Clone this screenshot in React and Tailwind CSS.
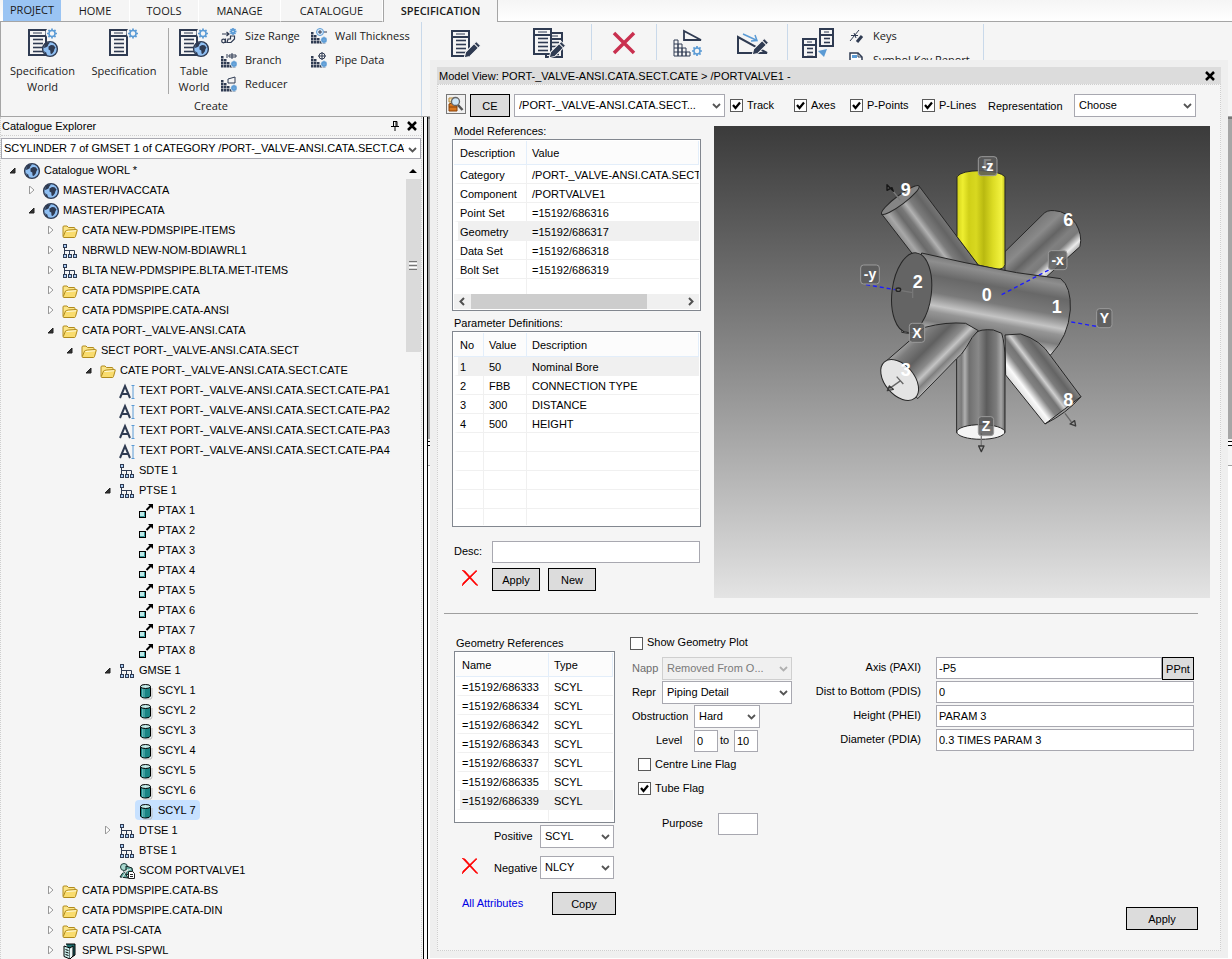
import React from 'react';

const NAVY = '#2f3b52';
const BLUE = '#5b9bd5';

/* ---------- shared drawing pieces ---------- */

const Gear = ({ x, y, r = 3 }) => (
  <g transform={`translate(${x} ${y})`} stroke={BLUE} fill="none">
    <circle r={r} strokeWidth="1.5" />
    {[0, 45, 90, 135, 180, 225, 270, 315].map((a) => (
      <path key={a} d={`M0 ${-r}V${-r - 2}`} strokeWidth="1.7" transform={`rotate(${a})`} />
    ))}
  </g>
);

const Globe = ({ x = 8, y = 8 }) => (
  <g transform={`translate(${x} ${y})`}>
    <circle r="7.4" fill="#8fbff2" stroke={NAVY} strokeWidth="1.4" />
    <path d="M-5.500 -4.500C-4 -6.500 -1.500 -7.200 0 -6.500L-1.500 -4.800L-2.500 -2.500L-4.500 -1.500L-6 -1Z" fill={NAVY} />
    <path d="M-1.500 -2.500L1 -4L3.500 -3.800L5.500 -1.500L4.500 0L3.800 2.500L1.800 5L.5 4.500L.3 1.500L-1.500 .5Z" fill={NAVY} />
    <path d="M-6 2L-4 3.500L-2.500 6.500L-5 5Z" fill={NAVY} />
  </g>
);

const Page = ({ x, y, w = 17, h = 25, lines = 4 }) => (
  <g transform={`translate(${x} ${y})`}>
    <rect x="1" y="1" width={w} height={h} fill="#f5f5f5" stroke={NAVY} strokeWidth="2" />
    <path d={`M1 7H${w + 1}`} stroke={NAVY} strokeWidth="2" />
    <path d={`M5 4H${w - 3}`} stroke={NAVY} />
    {Array.from({ length: lines }, (_, i) => (
      <path key={i} d={`M5 ${10.5 + i * 4}H${w - 2}`} stroke={NAVY} strokeWidth="1.6" />
    ))}
  </g>
);

const Pencil = ({ x, y }) => (
  <g transform={`translate(${x} ${y}) rotate(45)`}>
    <path d="M-3 -9H3V6L0 11L-3 6Z" fill={NAVY} stroke="#f5f5f5" strokeWidth="1" />
    <path d="M-3 -6H3" stroke="#f5f5f5" strokeWidth="1" />
  </g>
);

const Steps = ({ cell = 2.5 }) => (
  <g fill={NAVY}>
    {[0, 1, 2, 3].map((c) =>
      [0, 1, 2, 3].filter((r) => r >= c).map((r) => (
        <rect key={`${c}-${r}`} x={c * 3} y={4 + r * 3} width={cell} height={cell} />
      ))
    )}
    <rect x="12" y="13" width={cell} height={cell} />
  </g>
);

/* ---------- ribbon icons ---------- */

const SpecIcon = ({ world }) => (
  <svg width="32" height="30" viewBox="0 0 32 30" aria-hidden="true">
    <Page x={1} y={1} />
    <circle cx="25" cy="5" r="6.500" fill="#f5f5f5" />
    <Gear x={25} y={5.5} r={3} />
    {world && <Globe x={23} y={21} />}
  </svg>
);

const ModifyIcon = ({ double }) => (
  <svg width="34" height="30" viewBox="0 0 34 30" aria-hidden="true">
    {double && <Page x={12} y={4} w={16} h={24} />}
    <Page x={double ? 0 : 3} y={double ? 0 : 2} />
    <Pencil x={24} y={22} />
  </svg>
);

const DeleteIcon = () => (
  <svg width="24" height="30" viewBox="0 0 24 30" aria-hidden="true">
    <path d="M2 5L22 25M22 5L2 25" stroke="#c9304f" strokeWidth="3.500" />
  </svg>
);

const WedgeGridIcon = () => (
  <svg width="32" height="30" viewBox="0 0 32 30" aria-hidden="true">
    <path d="M12 3V12H29Z" fill="#f5f5f5" stroke={NAVY} strokeWidth="1.800" />
    <path d="M2 12H6V28H2ZM6 16H10V28H6ZM10 20H14V28H10ZM14 24H18V28H14ZM2 16H6M2 20H10M2 24H14" fill="none" stroke={NAVY} />
    <Gear x={25} y={23} r={3} />
  </svg>
);

const WedgeEditIcon = () => (
  <svg width="34" height="30" viewBox="0 0 34 30" aria-hidden="true">
    <path d="M2 9V25H31Z" fill="none" stroke={NAVY} strokeWidth="2" />
    <path d="M7 6L20 12M15 13L21 12.500L19 7" fill="none" stroke={BLUE} strokeWidth="1.500" />
    <Pencil x={24} y={19} />
  </svg>
);

const CopyPagesIcon = () => (
  <svg width="34" height="30" viewBox="0 0 34 30" aria-hidden="true">
    <Page x={17} y={0} w={13} h={17} lines={2} />
    <Page x={0} y={10} w={13} h={18} lines={3} />
    <path d="M16 23L25 21L22 29Z" fill={BLUE} />
  </svg>
);

const SmallIcon = ({ kind }) => (
  <svg width="16" height="16" viewBox="0 0 16 16" className="shrink-0" aria-hidden="true">
    {kind === 'size' && (
      <>
        <path d="M1 6H8M5.500 4L8 6L5.500 8" fill="none" stroke={NAVY} strokeWidth="1.200" />
        <circle cx="2.500" cy="13" r="1.800" fill="none" stroke={NAVY} strokeWidth="1.200" />
        <path d="M4.500 10.500V15M6 14.500H10L13.500 11V8H9.500V11H7Z" fill="none" stroke={NAVY} strokeWidth="1.200" />
        <Gear x={12} y={3.5} r={1.5} />
      </>
    )}
    {['branch', 'reducer', 'wall', 'pipe'].includes(kind) && (
      <>
        <Steps />
        <circle cx="13" cy="12" r="3.500" fill="#f5f5f5" />
        <Gear x={13} y={12} r={1.2} />
      </>
    )}
    {kind === 'branch' && <path d="M6 2V6M8 3H15V5H8ZM11 1V7" fill="none" stroke={NAVY} />}
    {kind === 'reducer' && <path d="M7 3L14 1V7H7Z" fill="#f5f5f5" stroke={NAVY} />}
    {kind === 'wall' && (
      <>
        <circle cx="9" cy="4" r="3.500" fill="#dcebfa" stroke={BLUE} />
        <path d="M9 2V6M7 4H11M13 4H16" stroke={NAVY} />
      </>
    )}
    {kind === 'pipe' && (
      <>
        <circle cx="11" cy="4" r="3" fill="none" stroke={NAVY} />
        <path d="M11 0V8M7 4H15" stroke={NAVY} />
      </>
    )}
    {kind === 'keys' && (
      <>
        <path d="M1 13L10 2M2 7.500H9M5 5L7 10" fill="none" stroke={NAVY} />
        <path d="M8 14L13 8" stroke={NAVY} strokeWidth="3" />
      </>
    )}
    {kind === 'report' && (
      <>
        <path d="M1 1H9L13 5V15H1Z" fill="#fff" stroke={NAVY} strokeWidth="1.500" />
        <path d="M3 3H8V6H3Z" fill={BLUE} />
        <path d="M9 1V5H13" fill="none" stroke={NAVY} />
      </>
    )}
  </svg>
);

/* ---------- tree icons ---------- */

const TreeIcon = ({ type }) => (
  <svg width="16" height="16" viewBox="0 0 16 16" className="mt-0.5 shrink-0 overflow-visible" aria-hidden="true">
    {type === 'globe' && <Globe x={8} y={8} />}
    {type === 'folder' && (
      <>
        <path d="M1 13.500V4Q1 3 2 3H5L6.500 4.500H12Q13 4.500 13 5.500V7" fill="#fbe487" stroke="#b08a1c" />
        <path d="M2 14.500Q1 14.500 1.300 13.500L3.500 8Q3.800 7.500 4.500 7.500L6.500 7L14.500 6.500Q15.500 6.500 15.200 7.500L13.500 13.500Q13.200 14.500 12.500 14.500Z" fill="#f9dc6e" stroke="#b08a1c" />
        <path d="M4.500 8.500L14 7.800" stroke="#fffbe0" />
      </>
    )}
    {type === 'nodes' && (
      <g stroke={NAVY} fill="#a9cdf6">
        <path d="M2.500 4V12M2.500 7.500H12.500V12M7.500 7.500V12" fill="none" />
        <rect x="1.500" y="1.500" width="3" height="3" />
        <rect x="1.500" y="11.500" width="3" height="3" />
        <rect x="6.500" y="11.500" width="3" height="3" />
        <rect x="11.500" y="11.500" width="3" height="3" />
      </g>
    )}
    {type === 'text' && (
      <>
        <path d="M1 15L6 3L11 15M3 11H9" fill="none" stroke={NAVY} strokeWidth="2" />
        <path d="M12.500 2.500H15.500M14 2.500V15.500M12.500 15.500H15.500" stroke={BLUE} fill="none" />
      </>
    )}
    {type === 'point' && (
      <>
        <rect x="1.500" y="8.500" width="6" height="6" fill="#bdebea" stroke="#000" />
        <path d="M6.500 9V13.500H2" fill="none" stroke="#3a9c9c" />
        <path d="M8.500 7L13 2.500" stroke="#000" strokeWidth="2" />
        <path d="M10 1H15V6Z" fill="#000" />
      </>
    )}
    {type === 'cyl' && (
      <>
        <path d="M5 16H13L14 14V5" fill="none" stroke="#b9b9b9" />
        <path d="M2.500 3.500V13Q3 15 7.500 15Q12 15 12.500 13V3.500Z" fill="#1b8484" stroke="#000" />
        <path d="M4.500 5V14M6 5.500V14.500" stroke="#66baba" />
        <ellipse cx="7.500" cy="3.500" rx="5" ry="2" fill="#c4ecea" stroke="#000" />
      </>
    )}
    {type === 'comp' && (
      <>
        <circle cx="5" cy="4" r="3.500" fill="#a8d8cf" stroke="#1d3f3c" />
        <path d="M7 3L13 5L14 10L7 12ZM1 14L5 8L9 15Z" fill="#5fa79c" stroke="#122" />
        <path d="M2 10L12 6M3 15L9 6" stroke="#fff" strokeWidth=".8" />
        <path d="M9.500 8.500H13.500L15.500 10.500V15.500H9.500Z" fill="#fff" stroke="#222" />
        <path d="M11 11.500H14M11 13.500H14" stroke="#222" />
      </>
    )}
    {type === 'book' && (
      <>
        <path d="M4 1H13V12L10 14" fill="#1c6b6b" stroke="#000" />
        <path d="M2 3L8 5V16L2 13.500Z" fill="#c9ecea" stroke="#000" />
        <path d="M8 5L11 3V13L8 16" fill="#e8f6f5" stroke="#000" />
        <path d="M3.500 6.500L6.500 7.500M3.500 9L6.500 10M3.500 11.500L6.500 12.500" stroke="#000" />
      </>
    )}
  </svg>
);

const RedCross = () => (
  <svg width="16" height="16" viewBox="0 0 16 16" className="shrink-0" aria-hidden="true">
    <path d="M0 0L3 1L16 15.500L14 15Z M0 16L1 13L14 0.500L15 1Z" fill="#f00" stroke="#f00" strokeWidth=".6" />
  </svg>
);

/* ---------- form controls ---------- */

const Select = ({ label, value, className, disabled, text = 'truncate pl-1 pr-5', height = 'h-[23px]' }) => (
  <span className={`relative block shrink-0 ${height} ${className}`}>
    <select
      aria-label={label}
      disabled={disabled}
      className={`block h-full w-full appearance-none border pb-0.5 outline-none ${text} ${
        disabled ? 'border-[#cfcfcf] bg-[#f0f0f0] text-[#7a7a7a]' : 'border-[#a8a8b0] bg-white text-black'
      }`}
    >
      <option>{value}</option>
    </select>
    <svg className="pointer-events-none absolute right-1 top-2" width="9" height="8" viewBox="0 0 9 8" aria-hidden="true">
      <path d="M1 2L4.500 5.500L8 2" fill="none" stroke={disabled ? '#b0b0b0' : '#555'} strokeWidth="1.800" />
    </svg>
  </span>
);

const Check = ({ label, checked, className = '' }) => (
  <label className={`flex shrink-0 items-center gap-1 whitespace-nowrap ${className}`}>
    <span className="relative block h-[13px] w-[13px]">
      <input type="checkbox" defaultChecked={checked} className="peer block h-[13px] w-[13px] appearance-none border border-[#5a5a5a] bg-white" />
      <svg className="pointer-events-none absolute left-0 top-0 hidden peer-checked:block" width="13" height="13" viewBox="0 0 13 13" aria-hidden="true">
        <path d="M3 6L5.500 9L10 3.500" fill="none" stroke="#000" strokeWidth="2.200" />
      </svg>
    </span>
    <span className="pb-0.5">{label}</span>
  </label>
);

const Button = ({ children, className }) => (
  <button type="button" className={`h-[23px] shrink-0 border border-black bg-[#dcdcdc] ${className}`}>
    {children}
  </button>
);

const Input = ({ className = '', ...rest }) => (
  <input type="text" className={`h-[22px] min-w-0 border border-[#a8a8b0] bg-white px-0.5 outline-none ${className}`} {...rest} />
);

const CloseIcon = () => (
  <svg width="10" height="10" viewBox="0 0 10 10" aria-hidden="true">
    <path d="M1 1L9 9M9 1L1 9" stroke="#000" strokeWidth="2.500" />
  </svg>
);

const ListTable = ({ columns, rows, selected, className, footer }) => (
  <div className={`flex flex-col overflow-hidden border border-[#82878f] bg-white p-px ${className}`}>
    <div className="min-h-0 flex-1 overflow-hidden">
      <table className="w-full table-fixed border-separate border-spacing-0 text-left">
        <thead>
          <tr className="h-6 bg-[#fcfcfc]">
            {columns.map((c) => (
              <th key={c.name} className={`border-b border-r border-[#e3eefa] p-0 pl-[5px] font-normal first:pl-1.5 ${c.width}`}>
                {c.name}
              </th>
            ))}
          </tr>
        </thead>
        <tbody>
          {rows.map((row, i) => (
            <tr key={i} className={`h-[19px] ${i === selected ? 'bg-[#f0f0f0]' : ''}`}>
              {columns.map((c, j) => (
                <td
                  key={c.name}
                  className={`overflow-hidden whitespace-nowrap border-b border-b-[#f0f0f0] p-0 pt-0.5 ${
                    j === 0 ? 'border-l-4 border-l-white pl-0.5' : 'pl-[5px]'
                  } ${j < columns.length - 1 ? 'border-r border-r-[#f0f0f0]' : ''}`}
                >
                  {row[j]}
                </td>
              ))}
            </tr>
          ))}
        </tbody>
      </table>
    </div>
    {footer}
  </div>
);

/* ---------- data ---------- */

const tree = [
  [0, 'open', 'globe', 'Catalogue WORL *'],
  [1, 'closed', 'globe', 'MASTER/HVACCATA'],
  [1, 'open', 'globe', 'MASTER/PIPECATA'],
  [2, 'closed', 'folder', 'CATA NEW-PDMSPIPE-ITEMS'],
  [2, 'closed', 'nodes', 'NBRWLD NEW-NOM-BDIAWRL1'],
  [2, 'closed', 'nodes', 'BLTA NEW-PDMSPIPE.BLTA.MET-ITEMS'],
  [2, 'closed', 'folder', 'CATA PDMSPIPE.CATA'],
  [2, 'closed', 'folder', 'CATA PDMSPIPE.CATA-ANSI'],
  [2, 'open', 'folder', 'CATA PORT-_VALVE-ANSI.CATA'],
  [3, 'open', 'folder', 'SECT PORT-_VALVE-ANSI.CATA.SECT'],
  [4, 'open', 'folder', 'CATE PORT-_VALVE-ANSI.CATA.SECT.CATE'],
  [5, '', 'text', 'TEXT PORT-_VALVE-ANSI.CATA.SECT.CATE-PA1'],
  [5, '', 'text', 'TEXT PORT-_VALVE-ANSI.CATA.SECT.CATE-PA2'],
  [5, '', 'text', 'TEXT PORT-_VALVE-ANSI.CATA.SECT.CATE-PA3'],
  [5, '', 'text', 'TEXT PORT-_VALVE-ANSI.CATA.SECT.CATE-PA4'],
  [5, '', 'nodes', 'SDTE 1'],
  [5, 'open', 'nodes', 'PTSE 1'],
  [6, '', 'point', 'PTAX 1'],
  [6, '', 'point', 'PTAX 2'],
  [6, '', 'point', 'PTAX 3'],
  [6, '', 'point', 'PTAX 4'],
  [6, '', 'point', 'PTAX 5'],
  [6, '', 'point', 'PTAX 6'],
  [6, '', 'point', 'PTAX 7'],
  [6, '', 'point', 'PTAX 8'],
  [5, 'open', 'nodes', 'GMSE 1'],
  [6, '', 'cyl', 'SCYL 1'],
  [6, '', 'cyl', 'SCYL 2'],
  [6, '', 'cyl', 'SCYL 3'],
  [6, '', 'cyl', 'SCYL 4'],
  [6, '', 'cyl', 'SCYL 5'],
  [6, '', 'cyl', 'SCYL 6'],
  [6, '', 'cyl', 'SCYL 7', true],
  [5, 'closed', 'nodes', 'DTSE 1'],
  [5, '', 'nodes', 'BTSE 1'],
  [5, '', 'comp', 'SCOM PORTVALVE1'],
  [2, 'closed', 'folder', 'CATA PDMSPIPE.CATA-BS'],
  [2, 'closed', 'folder', 'CATA PDMSPIPE.CATA-DIN'],
  [2, 'closed', 'folder', 'CATA PSI-CATA'],
  [2, 'closed', 'book', 'SPWL PSI-SPWL'],
];

const indents = ['w-0', 'w-[19px]', 'w-[38px]', 'w-[57px]', 'w-[76px]', 'w-[95px]', 'w-[114px]'];

const tabs = [
  { name: 'HOME', width: 'w-[69px]' },
  { name: 'TOOLS', width: 'w-[69px]' },
  { name: 'MANAGE', width: 'w-[82px]' },
  { name: 'CATALOGUE', width: 'w-[102px]' },
];

const modelRefs = [
  ['Category', '/PORT-_VALVE-ANSI.CATA.SECT.CATE'],
  ['Component', '/PORTVALVE1'],
  ['Point Set', '=15192/686316'],
  ['Geometry', '=15192/686317'],
  ['Data Set', '=15192/686318'],
  ['Bolt Set', '=15192/686319'],
  [],
];

const params = [
  ['1', '50', 'Nominal Bore'],
  ['2', 'FBB', 'CONNECTION TYPE'],
  ['3', '300', 'DISTANCE'],
  ['4', '500', 'HEIGHT'],
  [], [], [], [], [],
];

const geometryRefs = [
  ['=15192/686333', 'SCYL'],
  ['=15192/686334', 'SCYL'],
  ['=15192/686342', 'SCYL'],
  ['=15192/686343', 'SCYL'],
  ['=15192/686337', 'SCYL'],
  ['=15192/686335', 'SCYL'],
  ['=15192/686339', 'SCYL'],
  [],
];

const attributes = [
  { id: 'paxi', label: 'Axis (PAXI)', value: '-P5', button: 'PPnt' },
  { id: 'pdis', label: 'Dist to Bottom (PDIS)', value: '0' },
  { id: 'phei', label: 'Height (PHEI)', value: 'PARAM 3' },
  { id: 'pdia', label: 'Diameter (PDIA)', value: '0.3 TIMES PARAM 3' },
];

/* ---------- ribbon ---------- */

const BigButton = ({ icon, lines, className }) => (
  <button type="button" className={`flex shrink-0 flex-col items-center leading-4 ${className}`}>
    {icon}
    <span className="mt-[5px]">
      {lines.map((l) => (
        <span key={l} className="block">{l}</span>
      ))}
    </span>
  </button>
);

const SmallButton = ({ kind, label }) => (
  <button type="button" className="flex h-6 items-center gap-2 whitespace-nowrap">
    <SmallIcon kind={kind} />
    {label}
  </button>
);

const IconButton = ({ label, className, children }) => (
  <button type="button" aria-label={label} className={`flex h-9 shrink-0 justify-center pt-1 ${className}`}>
    {children}
  </button>
);

const Divider = () => <div className="h-full w-px shrink-0 bg-[#c9d9ea]" />;

const Ribbon = () => (
  <header className="shrink-0 font-['Open_Sans',sans-serif] text-[11px] text-[#1a1a1a]">
    <nav className="flex h-[22px] items-stretch bg-gradient-to-b from-[#f5f5f5] to-white">
      <div className="w-[3px] border-b border-[#a5a5a5]" />
      <button type="button" className="w-[58px] border-b border-[#a5a5a5] bg-[#9ac4f3] pb-0.5">PROJECT</button>
      {tabs.map((t) => (
        <button key={t.name} type="button" className={`border-b border-r border-b-[#a5a5a5] border-r-white bg-[#f5f5f5] ${t.width}`}>
          {t.name}
        </button>
      ))}
      <button type="button" className="w-[115px] border-x border-[#a5a5a5] bg-[#f5f5f5] font-semibold">SPECIFICATION</button>
      <div className="flex-1 border-b border-[#a5a5a5]" />
    </nav>
    <div className="flex h-[95px] border-b border-l border-[#a5a5a5] bg-[#f5f5f5]">
      <div className="flex w-[420px] shrink-0 flex-col">
        <div className="flex h-[76px] pt-0.5">
          <BigButton className="w-[83px] pt-1" icon={<SpecIcon world />} lines={['Specification', 'World']} />
          <BigButton className="w-20 pt-1" icon={<SpecIcon />} lines={['Specification']} />
          <div className="ml-1 mt-1 h-[66px] w-px bg-[#a8a8a8]" />
          <BigButton className="w-[50px] pt-1" icon={<SpecIcon world />} lines={['Table', 'World']} />
          <div className="ml-0.5 flex w-[90px] flex-col">
            <SmallButton kind="size" label="Size Range" />
            <SmallButton kind="branch" label="Branch" />
            <SmallButton kind="reducer" label="Reducer" />
          </div>
          <div className="flex flex-col">
            <SmallButton kind="wall" label="Wall Thickness" />
            <SmallButton kind="pipe" label="Pipe Data" />
          </div>
        </div>
        <div className="text-center leading-4">Create</div>
      </div>
      <Divider />
      <div className="flex flex-1 pt-0.5">
        <IconButton label="Modify specification" className="w-[86px]"><ModifyIcon /></IconButton>
        <IconButton label="Modify specifications" className="w-[83px]"><ModifyIcon double /></IconButton>
        <Divider />
        <IconButton label="Delete" className="w-[64px]"><DeleteIcon /></IconButton>
        <Divider />
        <IconButton label="Create bolt table" className="w-[62px]"><WedgeGridIcon /></IconButton>
        <IconButton label="Modify bolt table" className="w-[68px]"><WedgeEditIcon /></IconButton>
        <Divider />
        <IconButton label="Copy specification" className="w-[61px]"><CopyPagesIcon /></IconButton>
        <div className="flex w-[134px] flex-col">
          <SmallButton kind="keys" label="Keys" />
          <SmallButton kind="report" label="Symbol Key Report" />
        </div>
        <Divider />
      </div>
    </div>
  </header>
);

/* ---------- explorer ---------- */

const Explorer = () => (
  <aside className="flex w-[422px] shrink-0 flex-col border-x border-dotted border-[#cfcfcf]">
    <div className="flex h-[19px] shrink-0 items-center justify-between border-b border-dotted border-[#cfcfcf] pl-px pr-1">
      <h2>Catalogue Explorer</h2>
      <div className="flex items-center gap-2">
        <button type="button" aria-label="Pin">
          <svg width="8" height="10" viewBox="0 0 8 10" aria-hidden="true">
            <path d="M2 .5H6V5.500M2.500 .5V5.500M5 .5V5.500M0 5.500H8M4 6V10" fill="none" stroke="#000" />
          </svg>
        </button>
        <button type="button" aria-label="Close explorer"><CloseIcon /></button>
      </div>
    </div>
    <Select
      className="mt-0.5"
      height="h-[21px]"
      text="overflow-hidden text-clip whitespace-nowrap pl-0.5 pr-4"
      label="Current element"
      value="SCYLINDER 7 of GMSET 1 of CATEGORY /PORT-_VALVE-ANSI.CATA.SECT.CAT"
    />
    <div className="mt-px flex min-h-0 flex-1">
      <ul className="min-w-0 flex-1 overflow-hidden">
        {tree.map(([level, state, type, text, active]) => (
          <li key={text} className="flex h-5 items-center">
            <span className={`shrink-0 ${indents[level]}`} />
            <span className="flex w-5 shrink-0 justify-end pr-1">
              {state && (
                <svg width="8" height="8" viewBox="0 0 8 8" aria-hidden="true">
                  {state === 'open'
                    ? <path d="M6 2V7H1Z" fill="#333" stroke="#222" />
                    : <path d="M1.500 0L6 4L1.500 8Z" fill="#fff" stroke="#999" />}
                </svg>
              )}
            </span>
            <a href="#" className={`flex h-5 items-center gap-1 whitespace-nowrap rounded-sm pl-[3px] pr-1 ${active ? 'bg-[#c7e1ff]' : ''}`}>
              <TreeIcon type={type} />
              {text}
            </a>
          </li>
        ))}
      </ul>
      <div className="flex w-4 shrink-0 flex-col items-center">
        <svg width="16" height="19" viewBox="0 0 16 19" aria-hidden="true"><path d="M4 13L8 9L12 13Z" fill="#000" /></svg>
        <div className="flex h-[173px] w-[15px] flex-col items-center justify-center gap-px bg-[#dadada]">
          <span className="h-px w-2 bg-[#777]" />
          <span className="h-px w-2 bg-white" />
          <span className="h-px w-2 bg-[#777]" />
          <span className="h-px w-2 bg-white" />
          <span className="h-px w-2 bg-[#777]" />
        </div>
      </div>
    </div>
  </aside>
);

/* ---------- 3D view ---------- */

const Stops = ({ id, from, to, stops }) => (
  <linearGradient id={id} gradientUnits="userSpaceOnUse" x1={from[0]} y1={from[1]} x2={to[0]} y2={to[1]}>
    {stops.map(([o, c]) => <stop key={o} offset={o} stopColor={c} />)}
  </linearGradient>
);

const Tag = ({ x, y, w = 47, text, dy = 46, size = 42 }) => (
  <g>
    <rect x={x} y={y} width={w} height="57" rx="9" fill="#5c5c5c" fillOpacity=".85" stroke="#9b9b9b" strokeWidth="3" />
    <text x={x + w / 2} y={y + dy - 2} fontSize={size} textAnchor="middle">{text}</text>
  </g>
);

const ModelScene = () => (
  <svg className="h-full w-full" viewBox="0 0 496 472" preserveAspectRatio="xMinYMin meet" role="img" aria-label="Valve model">
    <defs>
      <Stops id="arm9" from={[95, 222]} to={[207, 138]} stops={[[0, '#8c8c8c'], [0.12, '#a8a8a8'], [0.3, '#6a6a6a'], [0.42, '#787878'], [0.54, '#b2b2b2'], [0.66, '#7c7c7c'], [0.85, '#646464'], [1, '#777']]} />
      <Stops id="arm6" from={[540, 270]} to={[634, 371]} stops={[[0, '#7c7c7c'], [0.2, '#8a8a8a'], [0.42, '#646464'], [0.6, '#808080'], [0.74, '#7a7a7a'], [0.9, '#ececec'], [1, '#b0b0b0']]} />
      <Stops id="arm5" from={[321, 0]} to={[465, 0]} stops={[[0, '#d2d21a'], [0.12, '#eeee30'], [0.25, '#d0d018'], [0.4, '#d8d820'], [0.56, '#b9b910'], [0.75, '#dcdc24'], [0.93, '#f2f240'], [1, '#c0c018']]} />
      <Stops id="body" from={[420, 376]} to={[377, 612]} stops={[[0, '#7a7a7a'], [0.08, '#8e8e8e'], [0.25, '#686868'], [0.46, '#7a7a7a'], [0.62, '#c4c4c4'], [0.7, '#959595'], [0.82, '#7c7c7c'], [0.9, '#a8a8a8'], [1, '#fff']]} />
      <Stops id="arm3" from={[170, 605]} to={[272, 708]} stops={[[0, '#a0a0a0'], [0.15, '#7c7c7c'], [0.4, '#606060'], [0.62, '#8a8a8a'], [0.74, '#c4c4c4'], [0.86, '#808080'], [0.96, '#a4a4a4'], [1, '#c4c4c4']]} />
      <Stops id="arm4" from={[320, 0]} to={[465, 0]} stops={[[0, '#8e8e8e'], [0.1, '#7c7c7c'], [0.17, '#b0b0b0'], [0.26, '#707070'], [0.45, '#888'], [0.62, '#5c5c5c'], [0.82, '#7c7c7c'], [0.92, '#a6a6a6'], [1, '#666']]} />
      <Stops id="arm8" from={[585, 852]} to={[693, 770]} stops={[[0, '#e4e4e4'], [0.12, '#fafafa'], [0.3, '#828282'], [0.45, '#747474'], [0.56, '#d0d0d0'], [0.68, '#7c7c7c'], [0.86, '#646464'], [1, '#858585']]} />
    </defs>
    <g transform="translate(136 14) scale(.3333)" stroke="#262626" strokeWidth="3" strokeLinejoin="round">
      <path d="M95 222L207 138L385 375L220 400L190 345Z" fill="url(#arm9)" />
      <ellipse cx="151" cy="180" rx="70" ry="14" transform="rotate(-37 151 180)" fill="#858585" />
      <path d="M465 335L578 224Q590 209 614 212Q650 214 677 250Q698 284 690 320L590 410L465 400Z" fill="url(#arm6)" />
      <path d="M321 110Q335 92 392 92Q450 94 465 110V374Q462 388 440 388L385 375L321 290Z" fill="url(#arm5)" />
      <path d="M215 339L345 368L500 398L632 416Q664 440 661 510Q655 590 602 645L155 577Z" fill="url(#body)" />
      <ellipse cx="185" cy="458" rx="59" ry="120" transform="rotate(7 185 458)" fill="#646464" />
      <path d="M465 585L512 582Q572 600 602 648L693 770L585 852L467 705Z" fill="url(#arm8)" />
      <path d="M585 852Q650 820 693 770" fill="none" />
      <path d="M320 878V640L375 580Q390 566 430 570L455 580Q465 610 465 660V878Z" fill="url(#arm4)" />
      <ellipse cx="392.500" cy="876" rx="72" ry="22" fill="#f4f4f4" />
      <path d="M110 662L225 562Q290 545 347 550L385 572Q366 588 349 622Q335 645 320 656L203 776Z" fill="url(#arm3)" />
      <ellipse cx="149" cy="720" rx="71" ry="44" transform="rotate(50 149 720)" fill="#e4e4e4" />

      {/* axis and p-point lines */}
      <g stroke="#1c1cff" strokeWidth="4" strokeDasharray="12 9" fill="none">
        <path d="M48 434L135 449" />
        <path d="M455 464L600 388" />
        <path d="M664 546L745 560" />
      </g>
      <g stroke="#3a3a3a" strokeWidth="4" fill="none">
        <path d="M150 180L128 152" stroke="#7a7a7a" />
        <path d="M130 154L111 134V151L126 143Z" stroke="#161616" />
        <path d="M152 722L118 746M140 710L160 732" stroke="#666" />
        <path d="M112 752L118 738L130 748Z" />
        <path d="M394 880V918" stroke="#777" />
        <path d="M386 918H402L394 935Z" />
        <path d="M645 820L664 846" stroke="#666" />
        <path d="M660 852L674 842L677 858Z" />
        <path d="M188 458L136 449M188 445V474" stroke="#777" />
        <ellipse cx="145" cy="449" rx="7" ry="5" stroke="#222" />
      </g>

      <g fill="#fff" stroke="none" fontFamily="Liberation Sans, Arial, sans-serif" fontWeight="700">
        <g fontSize="54" textAnchor="middle">
          <text x="167" y="167">9</text>
          <text x="655" y="258">6</text>
          <text x="203" y="443">2</text>
          <text x="410" y="483">0</text>
          <text x="620" y="519">1</text>
          <text x="167" y="707">3</text>
          <text x="655" y="797">8</text>
        </g>
        <Tag x={385} y={50} w={56} text="-z" />
        <text x="412" y="92" fontSize="50" textAnchor="middle" fillOpacity=".3">5</text>
        <Tag x={32} y={375} w={56} text="-y" dy={43} />
        <Tag x={595} y={332} w={56} text="-x" />
        <Tag x={740} y={506} w={46} text="Y" />
        <Tag x={178} y={550} w={46} text="X" />
        <Tag x={385} y={830} w={46} text="Z" />
      </g>
    </g>
  </svg>
);

/* ---------- model view dialog ---------- */

const HScroll = () => (
  <div className="flex h-[15px] shrink-0 items-center bg-[#f0f0f0]">
    <svg width="17" height="15" viewBox="0 0 17 15" aria-hidden="true"><path d="M10 4L6.500 7.500L10 11" fill="none" stroke="#505050" strokeWidth="2" /></svg>
    <div className="h-full flex-1"><div className="h-full w-5/6 bg-[#cdcdcd]" /></div>
    <svg width="17" height="15" viewBox="0 0 17 15" aria-hidden="true"><path d="M7 4L10.500 7.500L7 11" fill="none" stroke="#505050" strokeWidth="2" /></svg>
  </div>
);

const ModelView = () => (
  <section className="absolute bottom-px left-[430px] right-1 top-[60px] flex flex-col bg-[#efefef] p-[7px]">
    <div className="flex h-[17px] shrink-0 items-center justify-between bg-[#dcdcdc] pl-0.5 pr-1.5">
      <h1>Model View: PORT-_VALVE-ANSI.CATA.SECT.CATE &gt; /PORTVALVE1 -</h1>
      <button type="button" aria-label="Close model view"><CloseIcon /></button>
    </div>
    <div className="flex flex-1 flex-col border border-dotted border-[#cfcfcf] bg-[#f5f5f5]">
      <div className="flex h-8 shrink-0 items-end pl-2">
        <button type="button" aria-label="Find" className="mb-[3px] flex h-5 w-5 items-center justify-center border border-[#777] bg-[#f0f0f0]">
          <svg width="16" height="16" viewBox="0 0 16 16" aria-hidden="true">
            <path d="M1 2H6V6H1Z" fill="#f3e3b5" stroke="#b98b3c" />
            <path d="M1 8L4 7H9V15H1Z" fill="#d9771f" stroke="#8a4308" />
            <path d="M1 11H9" stroke="#8a4308" />
            <path d="M10 9L14.500 14" stroke="#555" strokeWidth="2.500" />
            <circle cx="7.500" cy="5.500" r="4" fill="#cfe6f7" stroke="#666" strokeWidth="1.300" />
          </svg>
        </button>
        <Button className="ml-1 w-10">CE</Button>
        <Select className="ml-1 w-[211px]" label="Component" value="/PORT-_VALVE-ANSI.CATA.SECT..." />
        <div className="ml-[5px] flex h-[23px] items-center">
          <Check className="w-16" label="Track" checked />
          <Check className="w-14" label="Axes" checked />
          <Check className="w-[72px]" label="P-Points" checked />
          <Check className="w-[66px]" label="P-Lines" checked />
          <span className="w-[86px]">Representation</span>
          <Select className="w-[122px]" label="Representation" value="Choose" />
        </div>
      </div>

      <div className="flex shrink-0 gap-[13px] pl-[14px] pr-2.5">
        <div className="w-[249px] shrink-0">
          <h3 className="mt-1.5 h-4 pl-0.5 leading-4">Model References:</h3>
          <ListTable
            className="h-[172px]"
            columns={[{ name: 'Description', width: 'w-[73px]' }, { name: 'Value', width: '' }]}
            rows={modelRefs}
            selected={3}
            footer={<HScroll />}
          />
          <h3 className="mt-1 h-4 pl-0.5 leading-4">Parameter Definitions:</h3>
          <ListTable
            className="h-[196px]"
            columns={[{ name: 'No', width: 'w-[30px]' }, { name: 'Value', width: 'w-[43px]' }, { name: 'Description', width: '' }]}
            rows={params}
            selected={0}
          />
          <div className="mt-3.5 flex items-center pl-0.5">
            <label htmlFor="desc" className="w-[38px] pb-0.5">Desc:</label>
            <Input id="desc" className="w-52" />
          </div>
          <div className="mt-[5px] flex items-center pl-2.5">
            <button type="button" aria-label="Delete parameter" className="pb-[3px]"><RedCross /></button>
            <Button className="ml-3.5 w-12">Apply</Button>
            <Button className="ml-2 w-12">New</Button>
          </div>
        </div>
        <div className="mt-[9px] h-[472px] min-w-0 flex-1 bg-gradient-to-b from-[#3b3b3b] to-[#e4e4e4]">
          <ModelScene />
        </div>
      </div>

      <hr className="ml-1.5 mr-[22px] mt-[15px] shrink-0 border-t border-[#9f9f9f]" />

      <div className="flex flex-1 pb-5 pl-4 pr-[22px] pt-[21px]">
        <div className="w-[162px] shrink-0">
          <h3 className="h-4 pl-0.5 leading-4">Geometry References</h3>
          <ListTable
            className="h-[172px] w-[161px]"
            columns={[{ name: 'Name', width: 'w-[93px]' }, { name: 'Type', width: '' }]}
            rows={geometryRefs}
            selected={6}
          />
          <div className="mt-0.5 flex items-center pl-10">
            <span className="w-[46px] pb-0.5">Positive</span>
            <Select className="w-[74px]" label="Positive" value="SCYL" />
          </div>
          <div className="mt-2 flex items-center pl-2">
            <button type="button" aria-label="Delete geometry" className="mr-4 pb-[3px]"><RedCross /></button>
            <span className="w-[46px]">Negative</span>
            <Select className="w-[74px]" label="Negative" value="NLCY" />
          </div>
          <div className="mt-[13px] flex items-center justify-between pl-2">
            <a href="#" className="pb-0.5 text-[#0000e6]">All Attributes</a>
            <Button className="w-16">Copy</Button>
          </div>
        </div>

        <div className="ml-3.5 flex w-[162px] shrink-0 flex-col gap-px">
          <Check className="mb-[5px] h-4" label="Show Geometry Plot" />
          <div className="flex items-center pl-0.5">
            <span className="w-[30px] pb-0.5 text-[#6d6d6d]">Napp</span>
            <Select className="w-[130px]" label="Napp" value="Removed From O..." disabled />
          </div>
          <div className="flex items-center pl-0.5">
            <span className="w-[30px] pb-0.5">Repr</span>
            <Select className="w-[130px]" label="Repr" value="Piping Detail" />
          </div>
          <div className="flex items-center pl-0.5">
            <span className="w-[62px] pb-0.5">Obstruction</span>
            <Select className="w-[66px]" label="Obstruction" value="Hard" />
          </div>
          <div className="flex h-[23px] items-center pl-[26px]">
            <label htmlFor="level-from" className="w-[38px] pb-0.5">Level</label>
            <Input id="level-from" defaultValue="0" className="w-6" />
            <label htmlFor="level-to" className="w-4 pb-0.5 pl-0.5">to</label>
            <Input id="level-to" defaultValue="10" className="w-6" />
          </div>
          <Check className="h-[23px] pl-2" label="Centre Line Flag" />
          <Check className="h-[23px] pl-2" label="Tube Flag" checked />
          <div className="mt-3 flex items-center pl-8">
            <label htmlFor="purpose" className="w-14 pb-0.5">Purpose</label>
            <Input id="purpose" className="w-10" />
          </div>
        </div>

        <div className="ml-2 flex min-w-0 flex-1 flex-col pt-[22px]">
          <div className="mr-1 flex flex-col gap-px">
            {attributes.map((a) => (
              <div key={a.id} className="flex h-[23px] items-start">
                <label htmlFor={a.id} className="mr-[15px] w-[121px] shrink-0 text-right leading-5">{a.label}</label>
                <Input id={a.id} defaultValue={a.value} className="flex-1" />
                {a.button && <Button className="w-8">{a.button}</Button>}
              </div>
            ))}
          </div>
          <Button className="mt-auto w-[72px] self-end">Apply</Button>
        </div>
      </div>
    </div>
  </section>
);

const App = () => (
  <div className="relative flex h-screen flex-col overflow-hidden bg-[#f5f5f5] font-['Liberation_Sans',Arial,sans-serif] text-[11px] leading-4 text-black">
    <Ribbon />
    <div className="flex min-h-0 flex-1">
      <Explorer />
      <div className="ml-px w-[5px] shrink-0 border-x border-black bg-[#fafafa]" />
      {/* document area behind the dialog */}
      <div className="flex flex-1 flex-col">
        <div className="h-[322px] border-t-2 border-[#777] bg-[#a6a6a6]" />
        <div className="mt-0.5 h-[5px] border-y border-black bg-white" />
        <div className="h-5 border-b border-[#a0a0a0]" />
        <div className="flex-1 bg-white" />
      </div>
    </div>
    <ModelView />
  </div>
);

export default App;
